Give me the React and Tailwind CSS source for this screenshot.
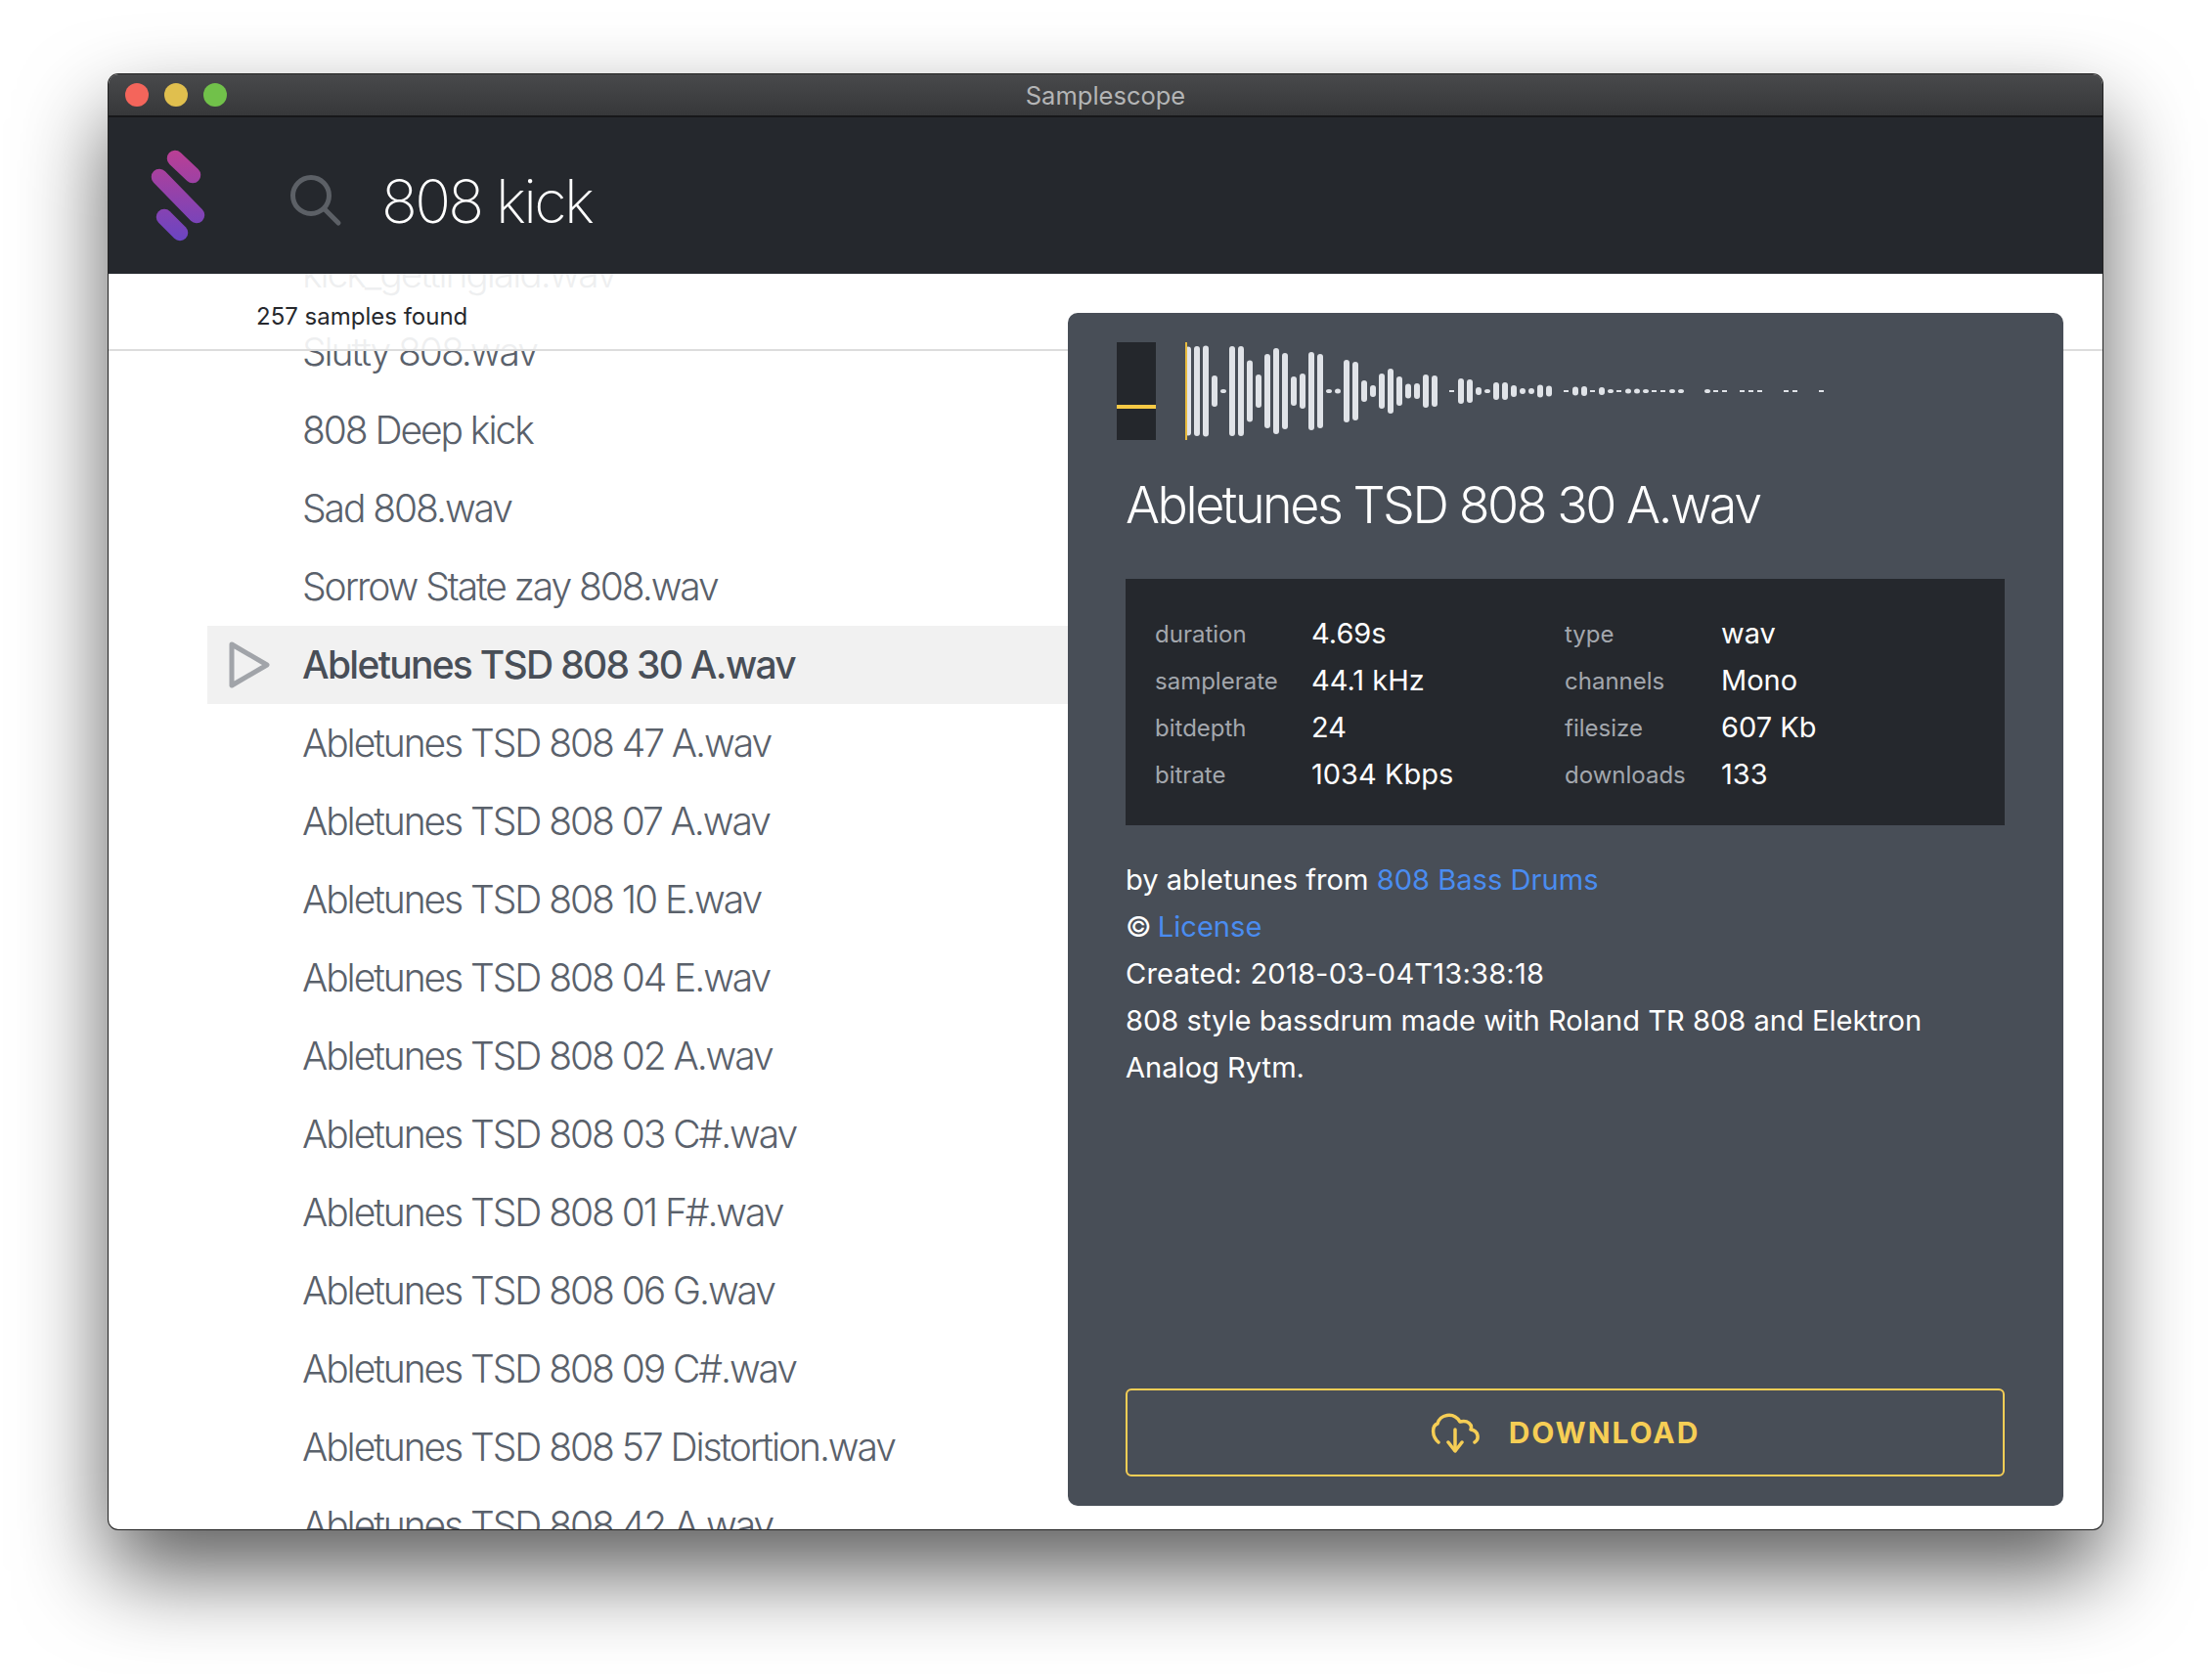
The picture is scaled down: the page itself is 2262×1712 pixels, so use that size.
import React from "react";

const rows = [
  "kick_gettinglaid.wav",
  "Slutty 808.wav",
  "808 Deep kick",
  "Sad 808.wav",
  "Sorrow State zay 808.wav",
  "Abletunes TSD 808 30 A.wav",
  "Abletunes TSD 808 47 A.wav",
  "Abletunes TSD 808 07 A.wav",
  "Abletunes TSD 808 10 E.wav",
  "Abletunes TSD 808 04 E.wav",
  "Abletunes TSD 808 02 A.wav",
  "Abletunes TSD 808 03 C#.wav",
  "Abletunes TSD 808 01 F#.wav",
  "Abletunes TSD 808 06 G.wav",
  "Abletunes TSD 808 09 C#.wav",
  "Abletunes TSD 808 57 Distortion.wav",
  "Abletunes TSD 808 42 A.wav",
];

// heights in px at 9px pitch; 0 = gap, 2 = short dash
const bars = [91,92,93,32,4,92,92,63,34,76,88,78,30,36,80,76,4,5,64,60,22,12,36,46,30,15,16,34,32,0,2,26,24,8,4,18,18,12,6,6,13,11,0,2,9,10,2,8,4,2,5,5,4,2,2,4,4,0,0,4,2,2,0,2,2,2,0,0,2,2,0,0,2];

const meta = [
  ["duration", "4.69s", "type", "wav"],
  ["samplerate", "44.1 kHz", "channels", "Mono"],
  ["bitdepth", "24", "filesize", "607 Kb"],
  ["bitrate", "1034 Kbps", "downloads", "133"],
];

function Logo() {
  return (
    <svg width="70" height="100" viewBox="0 0 70 100" className="shrink-0">
      <defs>
        <linearGradient id="lg" gradientUnits="userSpaceOnUse" x1="0" y1="0" x2="0" y2="100">
          <stop offset="0" stopColor="#bd3f92" />
          <stop offset="1" stopColor="#6745c4" />
        </linearGradient>
      </defs>
      <g stroke="url(#lg)" strokeWidth="16.5" strokeLinecap="round" fill="none">
        <path d="M30 12 L48 29" />
        <path d="M14 31 L52 70" />
        <path d="M19 72 L35 88" />
      </g>
    </svg>
  );
}

function Wave() {
  return (
    <svg width="670" height="100" viewBox="0 0 670 100" className="block">
      {bars.map((h, i) =>
        h === 0 ? null : (
          <rect
            key={i}
            x={i * 9}
            y={50 - h / 2}
            width={h === 2 ? 5 : 6}
            height={h}
            rx={h === 2 ? 0 : 3}
            fill="#e0e3e8"
          />
        )
      )}
      <rect x="0" y="0" width="2" height="100" fill="#e8bb3f" />
    </svg>
  );
}

export default function App() {
  return (
    <div className="h-[1712px] w-[2262px] overflow-hidden bg-white pt-[76px] pl-[111px] font-['Inter',sans-serif]">
      <div className="flex h-[1488px] w-[2039px] flex-col overflow-hidden rounded-[10px] bg-white shadow-[0_0_0_1px_#222,0_44px_90px_rgba(0,0,0,0.64)]">
        <div className="relative flex h-[44px] shrink-0 items-center gap-4 border-b-2 border-[#17181a] bg-gradient-to-b from-[#48494b] to-[#37383a] pl-[17px]">
          <span className="h-6 w-6 rounded-full bg-[#f4655b]" />
          <span className="h-6 w-6 rounded-full bg-[#e0bf4e]" />
          <span className="h-6 w-6 rounded-full bg-[#71c14a]" />
          <span className="absolute inset-x-0 pt-[2px] text-center text-[25.5px] text-[#b4b5b6]">Samplescope</span>
        </div>

        <div className="flex h-[160px] shrink-0 items-center bg-[#25282d] pl-[38px]">
          <Logo />
          <svg width="54" height="54" viewBox="0 0 54 54" className="ml-[77px] mt-[10px]" fill="none" stroke="#5c6066" strokeWidth="5" strokeLinecap="round">
            <circle cx="22" cy="22" r="18.5" />
            <path d="M36 36 L50 50" />
          </svg>
          <span className="ml-[40px] mt-[12px] text-[61px] font-extralight leading-none tracking-[-0.044em] text-white">808 kick</span>
        </div>

        <div className="relative flex min-h-0 flex-1 overflow-hidden">
          <div className="absolute inset-x-0 top-0 z-[1] flex h-[79px] items-center border-b-2 border-[#dcdcdc] bg-white/90 pl-[151px] pt-[10px] text-[24px] text-[#26282d]">
            257 samples found
          </div>
          <div className="-mr-[12px] mt-[-40px] min-w-0 flex-1 pl-[101px]">
            {rows.map((r, i) => (
              <div key={r} className={`flex h-[80px] items-center whitespace-nowrap text-[39px] ${i === 5 ? "bg-[#f1f1f1] font-medium tracking-[-0.044em] text-[#484e57]" : "font-light tracking-[-0.053em] text-[#5a616b]"}`}>
                <div className="flex w-[97px] shrink-0 justify-start pl-[22px]">
                  {i === 5 && (
                    <svg width="42" height="48" viewBox="0 0 42 48" fill="none" stroke="#a1a4a9" strokeWidth="5" strokeLinejoin="round">
                      <path d="M3 3 L39 24 L3 45 Z" />
                    </svg>
                  )}
                </div>
                {r}
              </div>
            ))}
          </div>

          <div className="relative z-[2] mb-[24px] mr-[40px] mt-[40px] flex w-[1018px] shrink-0 flex-col rounded-[10px] bg-[#484e57] pl-[59px] pr-[60px] pt-[30px] pb-[30px] text-white">
            <div className="-ml-[9px] flex">
              <div className="relative h-[100px] w-[40px] bg-[#24272c]">
                <div className="mt-[64px] h-[4px] bg-[#f6c945]" />
              </div>
              <div className="ml-[30px]">
                <Wave />
              </div>
            </div>

            <h1 className="mt-[37px] whitespace-nowrap text-[52px] font-light leading-[60px] tracking-[-0.047em]">Abletunes TSD 808 30 A.wav</h1>

            <div className="mt-[45px] grid h-[252px] grid-cols-[160px_259px_160px_1fr] content-center bg-[#25282d] pl-[30px] pt-[4px] text-[24px]">
              {meta.map((m) => (
                <React.Fragment key={m[0]}>
                  <div className="h-[48px] leading-[50px] text-[#a3a7ad]">{m[0]}</div>
                  <div className="h-[48px] text-[29px] leading-[48px]">{m[1]}</div>
                  <div className="h-[48px] leading-[50px] text-[#a3a7ad]">{m[2]}</div>
                  <div className="h-[48px] text-[29px] leading-[48px]">{m[3]}</div>
                </React.Fragment>
              ))}
            </div>

            <div className="mt-[32px] text-[29.1px] leading-[48px]">
              <p>by abletunes from <span className="text-[#4a8cf0]">808 Bass Drums</span></p>
              <p>© <span className="-ml-[2px] text-[#4a8cf0]">License</span></p>
              <p className="tracking-[0.006em]">Created: 2018-03-04T13:38:18</p>
              <p>808 style bassdrum made with Roland TR 808 and Elektron<br />Analog Rytm.</p>
            </div>

            <button className="mt-auto flex h-[90px] items-center justify-center gap-[30px] rounded-[6px] border-2 border-[#f6ce55] text-[30px] font-bold tracking-[0.065em] text-[#f6ce55]">
              <svg width="50" height="42" viewBox="0 0 50 42" fill="none" stroke="#f6ce55" strokeWidth="3.5" strokeLinecap="round" strokeLinejoin="round">
                <path d="M8 31 C1 25 1 14 7 12 C9 3 23 -1 30 10 C38 8 43 13 41 18 C49 19 50 28 45 31" />
                <path d="M25 18 L25 39" />
                <path d="M18 31 L25 40 L32 31" />
              </svg>
              DOWNLOAD
            </button>
          </div>
        </div>
      </div>
    </div>
  );
}
